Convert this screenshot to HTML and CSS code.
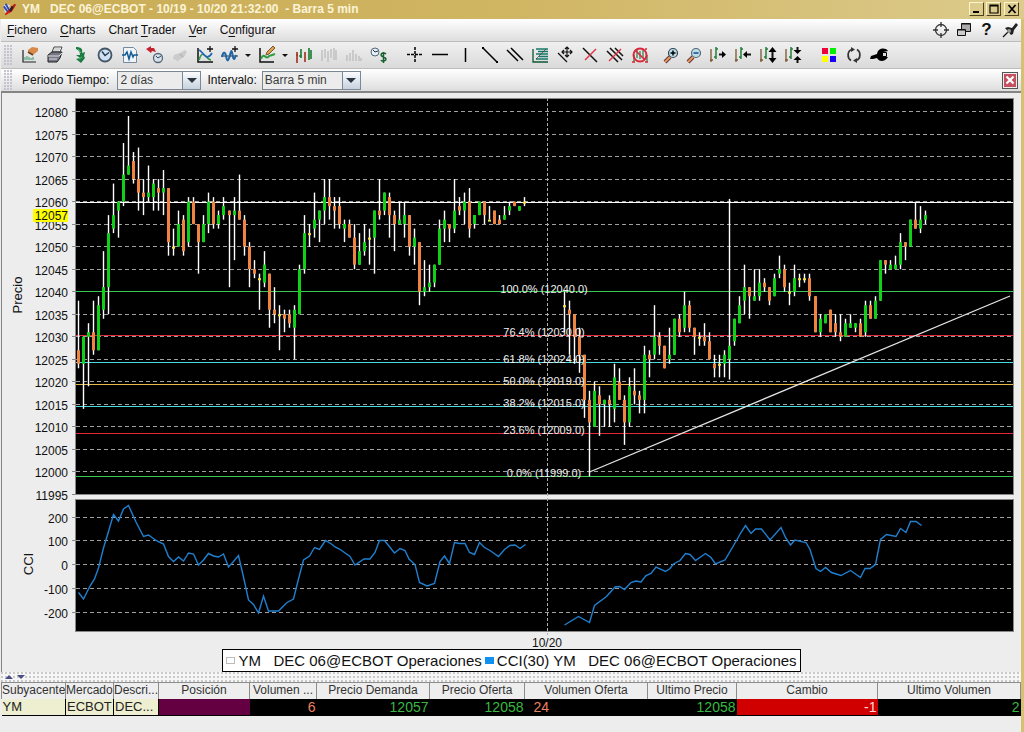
FILE: index.html
```html
<!DOCTYPE html>
<html lang="es">
<head>
<meta charset="utf-8">
<title>YM DEC 06@ECBOT</title>
<link rel="stylesheet" href="styles.css">
</head>
<body>
<div class="window">
  <header class="titlebar">
    <svg class="app-icon" viewBox="0 0 16 16"><path d="M1 3h7l-3 9H2z" fill="#e8d8e8"/><path d="M3 2l5 9M1 5l5 7" stroke="#2a48b8" stroke-width="2"/><path d="M2 14L13 2l2 1-5 8-4 2-3 2z" fill="#c81818"/><path d="M10 4l2 2-3 5-2-1z" fill="#222"/></svg>
    <h1 class="title">YM   DEC 06@ECBOT - 10/19 - 10/20 21:32:00  - Barra 5 min</h1>
    <div class="win-buttons">
      <button class="win-btn" aria-label="Minimizar"><svg viewBox="0 0 12 10"><path d="M2 8h6" stroke="#000" stroke-width="2"/></svg></button>
      <button class="win-btn" aria-label="Maximizar"><svg viewBox="0 0 12 10"><path d="M2 1h8v8H2zM2 2h8" fill="none" stroke="#000" stroke-width="1.2"/></svg></button>
      <button class="win-btn win-close" aria-label="Cerrar"><svg viewBox="0 0 12 10"><path d="M2.500 1l7 8M9.500 1l-7 8" stroke="#000" stroke-width="1.7"/></svg></button>
    </div>
  </header>

  <div class="content">
    <nav class="menubar">
      <button class="menu"><u>F</u>ichero</button>
      <button class="menu"><u>C</u>harts</button>
      <button class="menu">Chart <u>T</u>rader</button>
      <button class="menu"><u>V</u>er</button>
      <button class="menu">C<u>o</u>nfigurar</button>
      <div class="menu-tools">
        <button class="tool small" aria-label="Centrar"><svg viewBox="0 0 18 18"><circle cx="9" cy="9" r="5.500" fill="none" stroke="#333" stroke-width="1.300"/><path d="M9 1v5M9 12v5M1 9h5M12 9h5" stroke="#333" stroke-width="1.300"/></svg></button>
        <button class="tool small" aria-label="Ventanas"><svg viewBox="0 0 18 18"><path d="M6.500 2.500h9v8h-9z" fill="#aaa" stroke="#111"/><path d="M6.500 3h9" stroke="#111"/><path d="M2.500 8.500h8v6h-8z" fill="#ccc" stroke="#111"/><path d="M2.500 9h8" stroke="#111"/></svg></button>
        <button class="tool small help" aria-label="Ayuda">?</button>
        <button class="tool small" aria-label="Fijar"><svg viewBox="0 0 18 18"><path d="M2 16l6-6" stroke="#111" stroke-width="1.300"/><path d="M4 7l3-1 4 1 4-5 2 2-4 5-1 4-2 1z" fill="#222"/><circle cx="8" cy="10" r="2" fill="#999"/></svg></button>
      </div>
    </nav>

    <div class="toolbar">
      <span class="grip"></span>
      <button class="tool" aria-label="Nuevo gráfico"><svg viewBox="0 0 18 18"><path d="M2 4v12h13" fill="none" stroke="#222" stroke-width="1.200"/><path d="M4 14v-3M6 14v-4M8 14v-3M10 14v-2M12 14v-3" stroke="#396"/><path d="M7 4l4-3 6 1v3l-5 4-5-2z" fill="#d98a4a"/><path d="M7 6l5 3" stroke="#642" stroke-width="1.500"/></svg></button>
      <button class="tool" aria-label="Imprimir"><svg viewBox="0 0 18 18"><path d="M6 6l2-5h8l-2 5z" fill="#fff" stroke="#444"/><path d="M8 3h6M7 5h6" stroke="#777" stroke-width=".6"/><path d="M2 9l4-3h10l-2 6-3 4H2z" fill="#778" stroke="#222"/><path d="M2 10h11l3-3M3 13h8" stroke="#ddd" fill="none"/></svg></button>
      <button class="tool" aria-label="Insertar"><svg viewBox="0 0 18 18"><path d="M5 1c5 0 7 2 6 6l3-1-1 4 1 2-4 5-5-4 4-1-4-3 4 0c0-3-1-5-4-6z" fill="#1c7a42"/><path d="M7 3l3 4M8 13l3-2" stroke="#5bbf7e"/></svg></button>
      <button class="tool" aria-label="Hora"><svg viewBox="0 0 18 18"><circle cx="9" cy="9" r="6.500" fill="#cfe2f4" stroke="#456" stroke-width="1.800"/><path d="M6 5.500l3 4 4-3" fill="none" stroke="#234" stroke-width="1.300"/></svg></button>
      <button class="tool" aria-label="Página"><svg viewBox="0 0 18 18"><path d="M2.500 1.500h10l3 3v12h-13z" fill="#eef4fa" stroke="#789"/><path d="M1 9h3l2-3 2 7 2-7 2 5 1-2h4" fill="none" stroke="#125a94" stroke-width="1.500"/></svg></button>
      <button class="tool" aria-label="Retroceder"><svg viewBox="0 0 18 18"><circle cx="12" cy="12" r="4.500" fill="#d5e2ee" stroke="#567" stroke-width="1.300"/><path d="M10 10l2 2 3-2" fill="none" stroke="#345"/><path d="M0 3l5-3v2h3l2 4-4-1-1 2z" fill="#c42430"/></svg></button>
      <button class="tool" aria-label="Borrar" disabled><svg viewBox="0 0 18 18"><path d="M3 9l6-2 5-3 2 2-3 5-5 3-1 2-2-2-3-1z" fill="#cbcbcb"/><path d="M9 8l3 3" stroke="#b5b5b5" stroke-width="1.500"/></svg></button>
      <button class="tool" aria-label="Añadir estudio"><svg viewBox="0 0 18 18"><path d="M2 2v14h15" fill="none" stroke="#111" stroke-width="1.500"/><path d="M3 14C7 1 10 14 15 14" fill="none" stroke="#2d9a48" stroke-width="1.700"/><path d="M3 4c4 1 7 13 13 3" fill="none" stroke="#2267b5" stroke-width="1.700"/><path d="M14 0v6M11 3h6" stroke="#111" stroke-width="1.300"/></svg></button>
      <button class="tool" aria-label="Añadir indicador"><svg viewBox="0 0 18 18"><path d="M0 10h17" stroke="#333"/><path d="M1 11c1-5 3-6 4-1s2 7 4-1 2-2 3 2 2 1 3-2" fill="none" stroke="#2267a5" stroke-width="2"/><path d="M14 0v6M11 3h6" stroke="#111" stroke-width="1.300"/></svg></button>
      <button class="caret" aria-label="Más indicadores"></button>
      <button class="tool" aria-label="Dibujar"><svg viewBox="0 0 18 18"><path d="M2 2v14h14" fill="none" stroke="#111" stroke-width="1.500"/><path d="M3 13c3-8 5 2 8-3l6-2" fill="none" stroke="#2f9c45" stroke-width="2"/><path d="M8 9l1-3 6-6 2 2-6 6z" fill="#e1a04a" stroke="#753"/></svg></button>
      <button class="caret" aria-label="Más dibujos"></button>
      <button class="tool" aria-label="Barras"><svg viewBox="0 0 18 18"><path d="M2 6v11M1 9h2M10 6v10" stroke="#a43a26" stroke-width="1.700"/><path d="M6 3v9M4 10h3M14 2v12M16 4v9" stroke="#24813a" stroke-width="1.700"/></svg></button>
      <button class="tool" aria-label="Velas" disabled><svg viewBox="0 0 18 18"><path d="M2 4v11M5 3v9M8 5v11M11 3v9M14 2v12M16 4v10" stroke="#bcbcbc" stroke-width="1.300"/></svg></button>
      <button class="tool" aria-label="Volumen" disabled><svg viewBox="0 0 18 18"><path d="M2 15v-6M5 15V7M8 15V4M11 15V8M14 15v-5M16 15v-3" stroke="#bcbcbc" stroke-width="1.300"/></svg></button>
      <button class="tool" aria-label="Hora y precio"><svg viewBox="0 0 18 18"><circle cx="5" cy="6" r="4" fill="#e7eef5" stroke="#567"/><path d="M3 4l2 2 3-1" fill="none" stroke="#234"/><path d="M16 8c-2-2-5-1-5 1s5 2 5 4-4 3-5 1M13.500 6v11" fill="none" stroke="#17602f" stroke-width="1.500"/></svg></button>
      <span class="gap"></span>
      <button class="tool" aria-label="Cursor en cruz"><svg viewBox="0 0 18 18"><path d="M9 1v16M1 8.500h16" stroke="#000" stroke-width="1.500" stroke-dasharray="3 1"/></svg></button>
      <button class="tool" aria-label="Línea horizontal"><svg viewBox="0 0 18 18"><path d="M1 8.500h16" stroke="#000" stroke-width="1.500"/></svg></button>
      <button class="tool" aria-label="Línea vertical"><svg viewBox="0 0 18 18"><path d="M9.500 2v14" stroke="#000" stroke-width="1.500"/></svg></button>
      <button class="tool" aria-label="Tendencia"><svg viewBox="0 0 18 18"><path d="M2 2l14 14" stroke="#000" stroke-width="1.500"/><path d="M1 1h2v2H1zM15 15h2v2h-2z"/></svg></button>
      <button class="tool" aria-label="Canal"><svg viewBox="0 0 18 18"><path d="M1 4l11 11M5 2l12 12" stroke="#000" stroke-width="1.500"/></svg></button>
      <button class="tool" aria-label="Fibonacci"><svg viewBox="0 0 18 18"><path d="M2 3v13h15" fill="none" stroke="#153" stroke-width="1.300"/><path d="M5 3h12M7 5.500h10M5 8h12M8 10.500h9M5 13h12" stroke="#17786a" stroke-width="1.500"/><path d="M5 13L15 3" stroke="#333" stroke-width=".7"/></svg></button>
      <button class="tool" aria-label="Mover línea"><svg viewBox="0 0 18 18"><path d="M2 7l9 9" stroke="#111" stroke-width="1.300"/><path d="M11 1v10M6 6h10M9 3l2-2 2 2M9 9l2 2 2-2M8 4L6 6l2 2M14 4l2 2-2 2" fill="none" stroke="#111" stroke-width="1.200"/></svg></button>
      <button class="tool" aria-label="Borrar línea"><svg viewBox="0 0 18 18"><path d="M2 2l14 14" stroke="#111" stroke-width="1.500"/><path d="M15 3L4 14" stroke="#df3446" stroke-width="1.500"/></svg></button>
      <button class="tool" aria-label="Borrar líneas"><svg viewBox="0 0 18 18"><path d="M1 5l11 11M4 2l12 12M9 2l8 8" stroke="#111" stroke-width="1.500"/><path d="M15 3L3 15" stroke="#df3446" stroke-width="1.500"/></svg></button>
      <button class="tool" aria-label="Ocultar líneas"><svg viewBox="0 0 18 18"><path d="M3 9v7M6 4v8M9 5v8M12 4v8M16 9v7" stroke="#28784a" stroke-width="1.200"/><circle cx="9" cy="9" r="6.500" fill="none" stroke="#d92838" stroke-width="2"/><path d="M4 4l10 10M1 16h3M15 2v2M14 16h3" stroke="#d92838" stroke-width="1.500"/></svg></button>
      <span class="gap narrow"></span>
      <button class="tool small" aria-label="Acercar"><svg viewBox="0 0 18 18"><path d="M3 16l5-5" stroke="#633" stroke-width="4"/><path d="M3 16l5-5" stroke="#e79a62" stroke-width="2"/><circle cx="11" cy="7" r="4.500" fill="#b9dce6" stroke="#345" stroke-width="1.200"/><path d="M8.500 7h5M11 4.500v5" stroke="#000" stroke-width="1.500"/></svg></button>
      <button class="tool small" aria-label="Alejar"><svg viewBox="0 0 18 18"><path d="M3 16l5-5" stroke="#633" stroke-width="4"/><path d="M3 16l5-5" stroke="#e79a62" stroke-width="2"/><circle cx="11" cy="7" r="4.500" fill="#b9dce6" stroke="#567" stroke-width="1.200"/><path d="M8.500 7h5" stroke="#124a94" stroke-width="1.500"/></svg></button>
      <button class="tool" aria-label="Ensanchar barras"><svg viewBox="0 0 18 18"><path d="M2 3v13M1 14h3" stroke="#7c5733" stroke-width="1.300"/><path d="M7 1v12M5 11h2M7 3h2" stroke="#238038" stroke-width="1.500"/><path d="M10 8.500h5" stroke="#111" stroke-width="2"/><path d="M13 5l4 3.500-4 3.500z"/></svg></button>
      <button class="tool" aria-label="Estrechar barras"><svg viewBox="0 0 18 18"><path d="M2 3v13M1 14h3" stroke="#7c5733" stroke-width="1.300"/><path d="M7 1v12M5 11h2M7 3h2" stroke="#238038" stroke-width="1.500"/><path d="M12 8.500h5" stroke="#111" stroke-width="2"/><path d="M13 5l-4 3.500 4 3.500z"/></svg></button>
      <button class="tool" aria-label="Ampliar escala"><svg viewBox="0 0 18 18"><path d="M2 3v13M1 14h3" stroke="#7c5733" stroke-width="1.300"/><path d="M7 1v12M5 11h2M7 3h2" stroke="#238038" stroke-width="1.500"/><path d="M13.500 3v12" stroke="#111" stroke-width="2"/><path d="M9.500 6l4-5 4 5zM9.500 12l4 5 4-5z"/></svg></button>
      <button class="tool" aria-label="Reducir escala"><svg viewBox="0 0 18 18"><path d="M2 3v13M1 14h3" stroke="#7c5733" stroke-width="1.300"/><path d="M7 1v12M5 11h2M7 3h2" stroke="#238038" stroke-width="1.500"/><path d="M13.500 1v4M13.500 13v4" stroke="#111" stroke-width="2"/><path d="M9.500 4l4 4 4-4zM9.500 14l4-4 4 4z"/></svg></button>
      <span class="gap"></span>
      <button class="tool" aria-label="Colores"><svg viewBox="0 0 18 18"><path d="M2 2h6v6H2z" fill="#f00038"/><path d="M10 2h6v6h-6z" fill="#00f000"/><path d="M2 10h6v6H2z" fill="#ff0"/><path d="M10 10h6v6h-6z" fill="#1800f0"/></svg></button>
      <button class="tool" aria-label="Actualizar"><svg viewBox="0 0 18 18"><path d="M7 3.500C2 5 2 12 6 14.500M11 14.500c5-1.500 5-8.500 1-11" fill="none" stroke="#333" stroke-width="1.700"/><path d="M6 1l4 2.500L6 6zM12 12l-4 2.500 4 2.500z" fill="#333"/></svg></button>
      <button class="tool" aria-label="Herramientas"><svg viewBox="0 0 18 18"><path d="M0 13l1-3 6-2c1-6 8-7 11-3l-5 1v5h5c-3 5-9 5-11 1l-4 1z"/><path d="M12.500 6.500h4v4h-4z" fill="#ddd" stroke="#000"/></svg></button>
    </div>

    <div class="params">
      <span class="grip"></span>
      <label for="periodo">Periodo Tiempo:</label>
      <span class="combo period"><select id="periodo"><option>2 días</option></select><span class="combo-arrow"></span></span>
      <label for="intervalo">Intervalo:</label>
      <span class="combo interval"><select id="intervalo"><option>Barra 5 min</option></select><span class="combo-arrow"></span></span>
      <button class="close-chart" aria-label="Cerrar gráfico"><svg viewBox="0 0 14 14"><path d="M3.500 3.500l7 7M10.500 3.500l-7 7" stroke="#fff" stroke-width="2.200"/></svg></button>
    </div>

    <main class="chart-panel">
      <svg id="chart" class="chart" viewBox="2 93 1019 558" role="img" aria-label="Precio y CCI"></svg>
      <div class="legend">
        <span class="key key-price"></span><span>YM   DEC 06@ECBOT Operaciones</span>
        <span class="key key-cci"></span><span>CCI(30) YM   DEC 06@ECBOT Operaciones</span>
      </div>
    </main>

    <div class="splitter"><span class="split-up"></span><span class="split-down"></span></div>

    <table class="quotes">
      <colgroup><col class="w-sym"><col class="w-mkt"><col class="w-desc"><col class="w-pos"><col class="w-vol"><col class="w-bid"><col class="w-ask"><col class="w-asize"><col class="w-last"><col class="w-chg"><col class="w-lvol"></colgroup>
      <thead><tr><th class="left">Subyacente</th><th class="left">Mercado</th><th class="left">Descri...</th><th>Posición</th><th>Volumen ...</th><th>Precio Demanda</th><th>Precio Oferta</th><th>Volumen Oferta</th><th>Ultimo Precio</th><th>Cambio</th><th>Ultimo Volumen</th></tr></thead>
      <tbody><tr><td class="name">YM</td><td class="name">ECBOT</td><td class="name">DEC...</td><td class="position"></td><td class="size">6</td><td class="price">12057</td><td class="price">12058</td><td class="size ask-size">24</td><td class="price">12058</td><td class="change">-1</td><td class="price">2</td></tr></tbody>
    </table>
  </div>
</div>
<script src="chart.js"></script>
</body>
</html>
```

FILE: styles.css
```css
* { box-sizing: border-box; }

body {
  margin: 0;
  background: #ededed;
  font-family: "Liberation Sans", Arial, sans-serif;
  font-size: 12px;
  color: #111;
}

button {
  font: inherit;
  color: inherit;
  border: 0;
  padding: 0;
  background: none;
}

.window {
  min-height: 100vh;
  display: flex;
  flex-direction: column;
}

.titlebar {
  height: 19px;
  display: flex;
  align-items: center;
  gap: 5px;
  padding: 0 5px 2px 3px;
  background: linear-gradient(90deg, #c9ac55, #d0b563 50%, #dccb8c);
}

.app-icon { width: 14px; height: 14px; }

.title {
  flex: 1;
  margin: 0;
  font-size: 12px;
  line-height: 14px;
  white-space: pre;
  color: #fbf4d8;
}

.win-buttons { display: flex; gap: 2px; }

.win-btn {
  width: 15px;
  height: 14px;
  display: grid;
  place-items: center;
  background: #dccb8c;
  border: 1px solid;
  border-color: #fff6cc #4d431f #4d431f #fff6cc;
}

.win-btn svg { width: 12px; height: 10px; }
.win-close { margin-left: 1px; }

.content {
  flex: 1;
  display: flex;
  flex-direction: column;
  padding-left: 1px;
  border-right: 3px solid #d6c072;
}

.menubar {
  height: 22px;
  display: flex;
  align-items: center;
  gap: 13px;
  padding: 0 0 0 6px;
  background: linear-gradient(#fff, #dedede);
}

.menu { line-height: 16px; }
.menu u { text-underline-offset: 2px; }
.menu-tools { margin-left: auto; display: flex; }

.toolbar,
.params {
  display: flex;
  align-items: center;
  padding-left: 3px;
}

.toolbar {
  height: 28px;
  background: linear-gradient(#f0f0f0, #dadada);
  border-top: 1px solid #bcbcbc;
  border-bottom: 1px solid #bcbcbc;
}

.params {
  height: 22px;
  gap: 6px;
  padding-right: 3px;
  background: linear-gradient(#fff, #dedede);
}

.grip {
  flex: none;
  width: 9px;
  height: 20px;
  background: radial-gradient(circle at 1px 1px, #c4c4d0 1px, transparent 1px) 0 0 / 3px 3px;
}

.toolbar .grip { margin-right: 4px; }
.params .grip { margin-right: 3px; }

.tool {
  flex: none;
  width: 25px;
  height: 24px;
  display: grid;
  place-items: center;
}

.tool svg { width: 18px; height: 18px; }
.tool.small { width: 23px; }
.help { font-size: 17px; font-weight: bold; }
.gap { flex: none; width: 11px; }
.gap.narrow { width: 7px; }

.caret { width: 12px; height: 24px; display: grid; place-items: center; }
.caret::before {
  content: "";
  border: 3px solid transparent;
  border-top-color: #111;
  border-bottom: 0;
}

.combo { position: relative; height: 19px; }

.combo select {
  appearance: none;
  width: 100%;
  height: 19px;
  padding: 0 2px;
  font: inherit;
  color: #3c3c3c;
  background: #ececec;
  border: 1px solid #7c8794;
  border-radius: 0;
}

.period { width: 84px; margin-left: 2px; }
.interval { width: 99px; margin-left: -1px; }

.combo-arrow {
  position: absolute;
  inset: 1px 1px 1px auto;
  width: 18px;
  display: grid;
  place-items: center;
  background: linear-gradient(#fafcfe, #c6d2de);
  border-left: 1px solid #7c8794;
  pointer-events: none;
}

.combo-arrow::before {
  content: "";
  border: 5px solid transparent;
  border-top-color: #2c3440;
  border-bottom: 0;
}

.close-chart {
  margin-left: auto;
  width: 16px;
  height: 17px;
  display: grid;
  place-items: center;
  background: #c65062;
  border: 1px solid #555;
  outline: 1px solid #eee;
  outline-offset: -2px;
}

.close-chart svg { width: 14px; height: 14px; }

.chart-panel {
  display: flex;
  flex-direction: column;
  align-items: center;
  border-top: 2px solid #858585;
  border-left: 1px solid #858585;
  background: #ededed;
}

.chart { display: block; width: 100%; height: auto; }

.legend {
  display: flex;
  align-items: center;
  gap: 3px;
  height: 23px;
  margin-top: -2px;
  padding: 0 3px;
  background: #fff;
  border: 1px solid #000;
  font-size: 15px;
  line-height: 16px;
  white-space: pre;
}

.key { width: 9px; height: 7px; }
.key-price { border: 1px solid #bbb; }
.key-cci { background: #1090f0; }

.splitter {
  height: 10px;
  display: flex;
  align-items: center;
  gap: 4px;
  padding-left: 4px;
  background: radial-gradient(circle at 1px 1px, #c9c9c9 1px, transparent 1px) 0 0 / 4px 4px, #f6f6f6;
}

.split-up, .split-down { border: 4px solid transparent; }
.split-up { border-top: 0; border-bottom-color: #4c4c84; }
.split-down { border-bottom: 0; border-top-color: #4c4c84; }

.quotes {
  width: 100%;
  table-layout: fixed;
  border-collapse: collapse;
}

.w-sym { width: 64px; }
.w-mkt { width: 48px; }
.w-desc { width: 45px; }
.w-pos { width: 91px; }
.w-vol { width: 67px; }
.w-bid { width: 113px; }
.w-ask { width: 95px; }
.w-asize { width: 123px; }
.w-last { width: 89px; }
.w-chg { width: 141px; }
.w-lvol { width: 143px; }

.quotes th,
.quotes td {
  padding: 0 1px;
  overflow: hidden;
  white-space: nowrap;
}

.quotes th {
  height: 16px;
  line-height: 15px;
  font-weight: normal;
  color: #333;
  background: #eee;
  border: 1px solid #8c8c8c;
  border-bottom: 0;
}

.quotes th.left { text-align: left; padding: 0; }

.quotes td {
  height: 17px;
  font-size: 14px;
  line-height: 16px;
  text-align: right;
  background: #000;
  border-bottom: 1px solid #000;
}

.quotes .name { text-align: left; font-size: 13px; background: #eeeed0; border-right: 1px solid #000; color: #222; }
.quotes .position { background: #640042; }
.quotes .size { color: #ee8060; }
.quotes .ask-size { text-align: left; padding-left: 9px; }
.quotes .price { color: #38b840; }
.quotes .change { background: #d00000; color: #ffd8d8; }

.axis-label { font-size: 12px; text-anchor: end; fill: #111; }
.axis-date { font-size: 12px; text-anchor: middle; fill: #111; }
.axis-title { font-size: 13px; text-anchor: middle; fill: #111; }
.fib-label { font-size: 11px; text-anchor: middle; fill: #f0f0f0; }
.plot { fill: #000; stroke: #888; }
.grid { stroke: #a0a0a0; stroke-dasharray: 4 3; }
.session { stroke: #b0b0b0; stroke-dasharray: 3 2; }
.tick { stroke: #888; }
.wick { stroke: #fff; stroke-width: 1.4; }
.up { fill: #10d018; }
.down { fill: #ee8440; }
.flat { fill: #f0e040; }
.last-price { fill: #ff0; }
.trend { stroke: #e4e4e4; stroke-width: 1.3; }
.cci { fill: none; stroke: #2080d0; stroke-width: 1.4; }
```

FILE: chart.js
```js
const svg = document.getElementById("chart");

function add(tag, attrs, text) {
  const el = document.createElementNS("http://www.w3.org/2000/svg", tag);
  for (const key in attrs) el.setAttribute(key, attrs[key]);
  if (text !== undefined) el.textContent = text;
  svg.appendChild(el);
  return el;
}

function line(x1, y1, x2, y2, cls, stroke) {
  const attrs = { x1, y1, x2, y2, class: cls };
  if (stroke) attrs.stroke = stroke;
  add("line", attrs);
}

// Prices are stored as offsets from 12000.
const priceY = p => 111.5 + (80 - p) * 4.505;
const cciY = v => 564.5 - v * 0.2375;
const snap = y => Math.floor(y) + 0.5;
const LEFT = 76, RIGHT = 1013;

add("rect", { x: 75.5, y: 98.5, width: 938, height: 396, class: "plot" });
add("rect", { x: 75.5, y: 499.5, width: 938, height: 132, class: "plot" });

for (let p = 80; p >= -5; p -= 5) {
  const y = snap(priceY(p));
  if (p > -5) line(LEFT, y, RIGHT, y, "grid");
  line(72, y, 76, y, "tick");
  add("text", { x: 68, y: y + 5, class: "axis-label" }, 12000 + p);
}
for (let v = 200; v >= -200; v -= 100) {
  const y = snap(cciY(v));
  line(LEFT, y, RIGHT, y, "grid");
  line(72, y, 76, y, "tick");
  add("text", { x: 68, y: y + 5, class: "axis-label" }, v);
}
line(547.5, 98, 547.5, 635, "session");

add("rect", { x: 33, y: 209, width: 35, height: 13, class: "last-price" });
add("text", { x: 68, y: 220, class: "axis-label" }, "12057");
add("text", { x: 547, y: 647, class: "axis-date" }, "10/20");
add("text", { transform: "translate(22 295) rotate(-90)", class: "axis-title" }, "Precio");
add("text", { transform: "translate(33 564) rotate(-90)", class: "axis-title" }, "CCI");

// Retracement levels: line position, colour, label and label baseline.
const levels = [
  [291.5, "#38c850", "100.0% (12040.0)", 293],
  [335.5, "#e02838", "76.4% (12030.0)", 336],
  [362.5, "#48dce0", "61.8% (12024.0)", 363],
  [384.5, "#e8b848", "50.0% (12019.0)", 385],
  [406.5, "#48dce0", "38.2% (12015.0)", 407],
  [433.5, "#e02838", "23.6% (12009.0)", 434],
  [476.5, "#38c850", "0.0% (11999.0)", 477]
];
levels.forEach(l => line(LEFT, l[0], RIGHT, l[0], "level", l[1]));
line(LEFT, 202.5, RIGHT, 202.5, "level", "#fff");

// Each bar: high, low, body top, body bottom, direction (u, d, f).
const day1 = `38 23 27 24 d|30 14 30 24 u|33 19 31 30 u|38 26 31 27 d|39 27 37 27 u|49 34 41 36 u|57 35 53 41 u|64 53 57 54 u|60 52 60 58 u|73 59 66 60 u|
79 66 68 66 u|71 64 69 65 d|72 58 65 62 d|65 57 62 61 d|68 60 62 61 u|65 58 64 61 u|65 58 63 62 d|67 57 63 62 u|63 48 63 51 d|54 48 50 50 f|
58 50 55 50 u|57 48 56 49 d|61 50 60 51 u|61 55 60 55 d|55 44 55 51 d|57 51 55 51 u|62 53 60 55 u|61 54 60 55 d|58 54 57 55 u|61 56 59 57 u|
58 41 58 57 d|61 47 58 57 u|66 56 58 56 d|57 48 56 50 d|51 41 50 45 d|47 43 45 44 d|44 36 43 43 f|49 41 46 42 u|44 32 44 36 d|41 33 36 35 d|
37 27 35 35 f|36 31 35 34 d|36 32 35 33 d|37 25 36 32 u|46 35 45 35 u|57 44 53 45 u|55 50 53 53 f|62 52 56 54 u|58 51 58 56 u|65 55 61 58 u|
65 56 61 59 d|61 54 59 58 d|61 54 59 55 d|56 51 55 54 u|56 52 55 52 d|55 45 52 46 d|53 46 49 46 u|55 48 51 49 u|54 46 52 52 f|58 44 58 52 u|
65 56 58 57 d|62 57 62 58 u|62 52 61 57 d|58 49 57 55 d|60 55 56 55 u|60 52 57 55 u|57 48 57 50 d|54 46 52 50 u|51 37 51 40 d|47 39 41 40 u|
46 40 42 41 u|46 41 46 42 u|56 46 54 46 u|58 51 56 54 u|55 51 55 54 d|65 53 58 54 u|61 57 59 58 d|62 55 60 58 u|63 52 60 54 d|57 54 57 55 u|
60 57 60 57 u|60 55 60 57 d|59 56 56 56 f|58 55 58 55 d|57 55 56 55 d|59 56 57 56 u|60 57 59 58 u|60 59 60 59 d|59 58 59 58 u|61 59 60 60 f`;

const day2 = `40 31 37 37 f|38 26 36 35 d|35 24 35 30 d|32 22 30 26 d|26 12 26 16 d|18 -1 16 11 d|20 10 18 10 u|19 8 17 15 d|16 10 16 15 u|17 10 16 15 d|
24 11 21 14 u|23 16 20 16 d|17 6 16 11 d|21 10 19 11 u|23 15 18 17 d|18 13 17 16 d|28 13 26 16 u|27 21 26 25 d|37 25 30 26 u|31 26 30 28 d|
28 23 28 23 d|32 24 26 25 u|34 26 34 26 u|35 30 34 31 d|40 31 37 32 u|38 31 37 32 d|32 26 32 30 d|31 28 30 30 f|33 28 30 29 d|31 25 29 25 d|
26 21 24 23 d|26 21 24 24 f|27 21 26 24 u|60.6 20.5 28 25 u|34 28 34 29 u|39 33 37 33 u|46 35 41 38 u|41 34 41 39 d|45 38 39 38 u|45 38 42 39 u|
43 40 42 41 d|41 37 41 38 d|44 39 43 39 u|48 43 45 44 u|46 40 45 41 d|42 37 40 40 f|46 39 43 40 u|44 41 43 43 f|44 42 43 43 f|44 38 43 39 d|
39 31 39 31 d|35 30 34 31 u|35 33 35 33 u|36 31 36 31 d|35 30 33 31 d|35 29 31 30 d|34 30 33 30 u|35 32 33 32 u|33 31 33 32 u|34 30 33 30 d|
38 30 37 31 u|38 34 37 34 d|39 34 38 34 u|47 38 47 38 u|47 44 47 46 d|47 45 46 45 u|48 45 46 45 u|53 45 51 46 u|51 47 51 50 d|56 50 56 50 u|
60 54 56 54 d|59 53 56 54 u|58 55 57 56 u`;

const bodyClass = { u: "up", d: "down", f: "flat" };
function bars(data, startX) {
  data.split("|").forEach((row, i) => {
    const [high, low, top, bottom, dir] = row.trim().split(" ");
    const x = snap(startX + i * 5.01);
    line(x, priceY(high), x, priceY(low), "wick");
    const height = Math.max(2, (top - bottom) * 4.505);
    add("rect", { x: x - 1.5, y: priceY(top), width: 3, height, class: bodyClass[dir] });
  });
}
bars(day1, 78.7);
bars(day2, 564.5);

levels.forEach(l => add("text", { x: 544, y: l[3], class: "fib-label" }, l[2]));
line(589.5, 472, 1010, 296, "trend");

add("polyline", { class: "cci", points: `78.5,592.5 83.5,599 90,586 94.5,579 98.5,568 103.5,548 108.5,531.5 113.5,514.5 118.5,521 123.5,509 128.5,505.5
136,522 143.5,536.5 148.5,535 156,540.5 163.5,544 168.5,556.5 173.5,561.5 178.5,557 183.5,561 188.5,553 193.5,554 198.5,565 203.5,560 208.5,553.5
213.5,556 218.5,557 223.5,554 228.5,567 233.5,561.5 238.5,555.5 243.5,577 248.5,600 253.5,604.5 258.5,613 263.5,596 268.5,611 278.5,611 287,602.5
293.5,599 298.5,579 303.5,560 309.5,556 314.5,547.5 319.5,549.5 325.5,540.5 331.5,544 335,547 339.5,549 350,556.5 355,565 364,559 370,559
375,552.5 379.5,540.5 384.5,540.5 394.5,553 400,548.5 405,550.5 409,559 415,564.5 419.5,582.5 427,586 434.5,583.5 440,561.5 444.5,556 449.5,563.5
454.5,542.5 459.5,543.5 465,543.5 469.5,552.5 474.5,554.5 479.5,542.5 484.5,547.5 490,550.5 498.5,556.5 504.5,549.5 510,545.5 515,545 520,548.5 525.5,544.5` });
add("polyline", { class: "cci", points: `564.5,625 578.5,616.5 589.5,622.5 594.5,605.5 606.5,596.5 615,587 619.5,586.5 624.5,589.5 631,582.5 636,581 641,582
646,575.5 651,573.5 656,567 665.5,571.5 670,568.5 673.5,564 680,560.5 685.5,553.5 690,554.5 695.5,560.5 705.5,553.5 711,557.5 715.5,564 725,560
736.5,540.5 741,532.5 745.5,525.5 751,533.5 755.5,529 761.5,529 770,540 781,527.5 785.5,537.5 790.5,545 795,540 806,542.5 810,549.5 816,568.5
820.5,571.5 825.5,567.5 831.5,572.5 841,575.5 850.5,570.5 860.5,577.5 865,568.5 870,568.5 875.5,564.5 880.5,539.5 886.5,534.5 896,536.5
900.5,528.5 906,532.5 910.5,521.5 916,521.5 921.5,525.5` });
```
